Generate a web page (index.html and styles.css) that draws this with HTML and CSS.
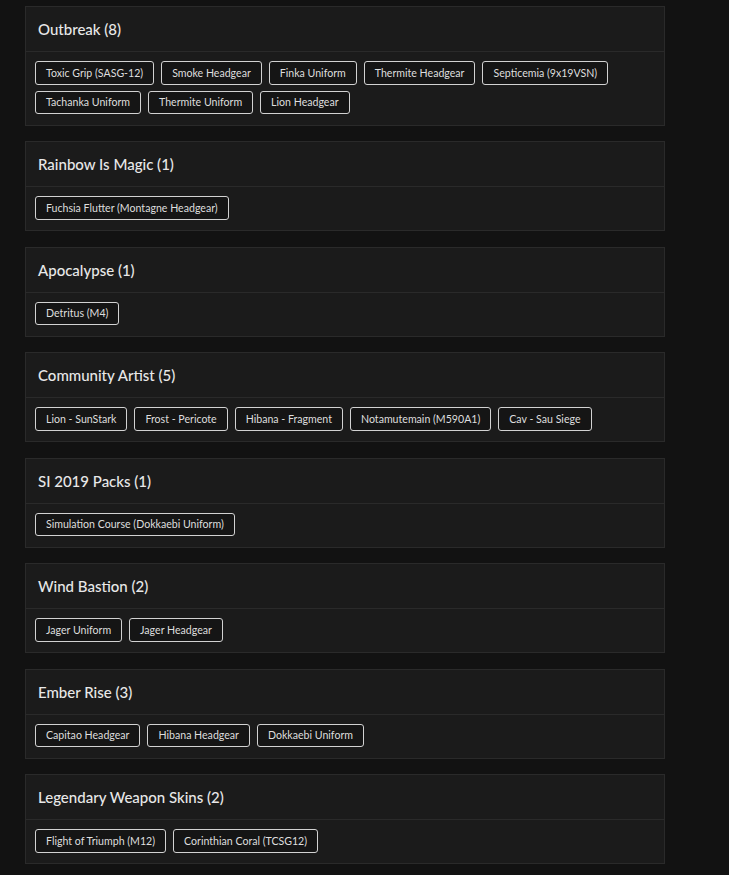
FILE: index.html
```html
<!DOCTYPE html>
<html lang="en">
<head>
<meta charset="utf-8">
<title>Bundles</title>
<link rel="stylesheet" href="styles.css">
</head>
<body>
<div class="page">
  <section class="card">
    <div class="card-head">Outbreak (8)</div>
    <div class="card-body">
      <span class="tag">Toxic Grip (SASG-12)</span>
      <span class="tag">Smoke Headgear</span>
      <span class="tag">Finka Uniform</span>
      <span class="tag">Thermite Headgear</span>
      <span class="tag">Septicemia (9x19VSN)</span>
      <span class="tag">Tachanka Uniform</span>
      <span class="tag">Thermite Uniform</span>
      <span class="tag">Lion Headgear</span>
    </div>
  </section>
  <section class="card">
    <div class="card-head">Rainbow Is Magic (1)</div>
    <div class="card-body">
      <span class="tag">Fuchsia Flutter (Montagne Headgear)</span>
    </div>
  </section>
  <section class="card">
    <div class="card-head">Apocalypse (1)</div>
    <div class="card-body">
      <span class="tag">Detritus (M4)</span>
    </div>
  </section>
  <section class="card">
    <div class="card-head">Community Artist (5)</div>
    <div class="card-body">
      <span class="tag">Lion - SunStark</span>
      <span class="tag">Frost - Pericote</span>
      <span class="tag">Hibana - Fragment</span>
      <span class="tag">Notamutemain (M590A1)</span>
      <span class="tag">Cav - Sau Siege</span>
    </div>
  </section>
  <section class="card">
    <div class="card-head">SI 2019 Packs (1)</div>
    <div class="card-body">
      <span class="tag">Simulation Course (Dokkaebi Uniform)</span>
    </div>
  </section>
  <section class="card">
    <div class="card-head">Wind Bastion (2)</div>
    <div class="card-body">
      <span class="tag">Jager Uniform</span>
      <span class="tag">Jager Headgear</span>
    </div>
  </section>
  <section class="card">
    <div class="card-head">Ember Rise (3)</div>
    <div class="card-body">
      <span class="tag">Capitao Headgear</span>
      <span class="tag">Hibana Headgear</span>
      <span class="tag">Dokkaebi Uniform</span>
    </div>
  </section>
  <section class="card">
    <div class="card-head">Legendary Weapon Skins (2)</div>
    <div class="card-body">
      <span class="tag">Flight of Triumph (M12)</span>
      <span class="tag">Corinthian Coral (TCSG12)</span>
    </div>
  </section>
</div>
</body>
</html>
```

FILE: styles.css
```css
html, body {
  margin: 0;
  padding: 0;
  background: #121212;
}
body {
  font-family: "Lato", "Liberation Sans", sans-serif;
  color: #e4e4e4;
}
.page {
  width: 640px;
  padding: 6px 0 0 25px;
}
.card {
  background: #1b1b1b;
  border: 1px solid #2a2a2a;
  margin-bottom: 15.5px;
}
.card-head {
  height: 45px;
  box-sizing: border-box;
  padding: 0 12px;
  display: flex;
  align-items: center;
  font-size: 15px;
  font-weight: 500;
  color: #e8e8e8;
  border-bottom: 1px solid #2a2a2a;
}
.card-body {
  display: flex;
  flex-wrap: wrap;
  gap: 6px 7px;
  padding: 9px 9px 10.5px;
}
.tag {
  display: inline-flex;
  align-items: center;
  height: 23.5px;
  box-sizing: border-box;
  padding: 0 10px;
  border: 1px solid #d2d2d2;
  border-radius: 3px;
  background: #151515;
  font-size: 10.6px;
  color: #dedede;
}
```
